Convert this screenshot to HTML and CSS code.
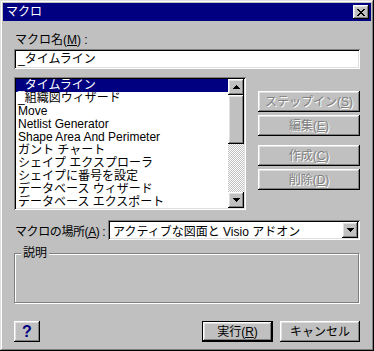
FILE: index.html
```html
<!DOCTYPE html>
<html lang="ja">
<head>
  <meta charset="UTF-8">
  <title>マクロ</title>
  <link rel="stylesheet" href="styles.css">
</head>
<body>
  <div class="window">
    <div class="titlebar">
      <span class="title">マクロ</span>
      <div class="close raised">
        <svg width="8" height="7" viewBox="0 0 8 7"><path d="M0 0h2v1h-2zM6 0h2v1h-2zM1 1h2v1h-2zM5 1h2v1h-2zM2 2h4v1h-4zM3 3h2v1h-2zM2 4h4v1h-4zM1 5h2v1h-2zM5 5h2v1h-2zM0 6h2v1h-2zM6 6h2v1h-2z" fill="#000"/></svg>
      </div>
    </div>

    <div class="content">
      <div class="label">マクロ名(<u>M</u>) :</div>
      <div class="field sunken">_タイムライン</div>

      <div class="list-row">
        <div class="listbox sunken">
          <ul class="items">
            <li class="selected">_タイムライン</li>
            <li>_組織図ウィザード</li>
            <li>Move</li>
            <li>Netlist Generator</li>
            <li>Shape Area And Perimeter</li>
            <li>ガント チャート</li>
            <li>シェイプ エクスプローラ</li>
            <li>シェイプに番号を設定</li>
            <li>データベース ウィザード</li>
            <li>データベース エクスポート</li>
          </ul>
          <div class="scrollbar">
            <div class="sb-btn raised">
              <svg width="7" height="4" viewBox="0 0 7 4"><path d="M3 0h1v1h1v1h1v1h1v1H0V3h1V2h1V1h1z" fill="#000"/></svg>
            </div>
            <div class="sb-thumb raised"></div>
            <div class="sb-track"></div>
            <div class="sb-btn raised">
              <svg width="7" height="4" viewBox="0 0 7 4"><path d="M0 0h7v1H6v1H5v1H4v1H3V3H2V2H1V1H0z" fill="#000"/></svg>
            </div>
          </div>
        </div>

        <div class="side-buttons">
          <div class="btn raised disabled">ステップイン(<u>S</u>)</div>
          <div class="btn raised disabled">編集(<u>E</u>)</div>
          <div class="btn raised disabled spaced">作成(<u>C</u>)</div>
          <div class="btn raised disabled">削除(<u>D</u>)</div>
        </div>
      </div>

      <div class="location-row">
        <span class="location-label">マクロの場所(<u>A</u>) :</span>
        <div class="combo sunken">
          <span class="combo-text">アクティブな図面と Visio アドオン</span>
          <div class="drop raised">
            <svg width="7" height="4" viewBox="0 0 7 4"><path d="M0 0h7v1H6v1H5v1H4v1H3V3H2V2H1V1H0z" fill="#000"/></svg>
          </div>
        </div>
      </div>

      <div class="groupbox">
        <span class="group-title">説明</span>
      </div>

      <div class="footer">
        <div class="btn raised help">?</div>
        <div class="spacer"></div>
        <div class="btn raised default">実行(<u>R</u>)</div>
        <div class="btn raised cancel">キャンセル</div>
      </div>
    </div>
  </div>
</body>
</html>
```

FILE: styles.css
```css
* {
  box-sizing: border-box;
}

body {
  margin: 0;
  font-family: "Liberation Sans", "Noto Sans CJK JP", sans-serif;
  font-size: 12px;
  color: #000;
  background: #c0c0c0;
}

u {
  text-decoration-thickness: 1px;
  text-underline-offset: 1px;
}

.window {
  width: 374px;
  height: 351px;
  padding: 3px;
  background: #c0c0c0;
  box-shadow: inset -1px -1px #000, inset 1px 1px #dfdfdf,
              inset -2px -2px #808080, inset 2px 2px #fff;
}

.raised {
  background: #c0c0c0;
  box-shadow: inset -1px -1px #000, inset 1px 1px #fff,
              inset -2px -2px #808080, inset 2px 2px #dfdfdf;
}

.sunken {
  background: #fff;
  box-shadow: inset 1px 1px #808080, inset -1px -1px #fff,
              inset 2px 2px #000, inset -2px -2px #dfdfdf;
}

/* title bar */
.titlebar {
  height: 18px;
  background: #000080;
  display: flex;
  align-items: center;
  padding: 0 2px 0 3px;
}

.title {
  color: #fff;
  line-height: 18px;
  flex: 1;
}

.close {
  width: 16px;
  height: 14px;
  display: flex;
  align-items: center;
  justify-content: center;
}

/* content */
.content {
  padding: 0 11px;
}

.label {
  margin-top: 12px;
  height: 14px;
  line-height: 14px;
  padding-left: 1px;
}

.field {
  margin-top: 2px;
  height: 20px;
  line-height: 20px;
  padding-left: 4px;
}

.list-row {
  display: flex;
  margin-top: 8px;
  height: 133px;
}

.listbox {
  width: 232px;
  padding: 2px;
  display: flex;
}

.items {
  list-style: none;
  margin: 0;
  padding: 0;
  flex: 1;
  overflow: hidden;
}

.items li {
  height: 13px;
  line-height: 13px;
  padding-left: 2px;
  white-space: nowrap;
}

.items li.selected {
  background: #000080;
  color: #fff;
}

.scrollbar {
  width: 16px;
  display: flex;
  flex-direction: column;
}

.sb-btn {
  height: 16px;
  display: flex;
  align-items: center;
  justify-content: center;
}

.sb-thumb {
  height: 49px;
}

.sb-track {
  flex: 1;
  background: repeating-conic-gradient(#c0c0c0 0 25%, #fff 0 50%) 0 0 / 2px 2px;
}

.side-buttons {
  margin-left: 12px;
  padding-top: 14px;
  width: 102px;
  display: flex;
  flex-direction: column;
  gap: 3px;
}

.btn {
  height: 21px;
  display: flex;
  align-items: center;
  justify-content: center;
  line-height: 14px;
  white-space: nowrap;
}

.btn.disabled {
  color: #808080;
  text-shadow: 1px 1px 0 #fff;
}

.btn.spaced {
  margin-top: 6px;
}

.location-row {
  display: flex;
  align-items: center;
  margin-top: 10px;
  height: 20px;
}

.location-label {
  width: 94px;
  flex: none;
  padding-left: 1px;
  white-space: nowrap;
  letter-spacing: -0.4px;
}

.combo {
  flex: 1;
  height: 20px;
  display: flex;
  align-items: center;
  padding: 2px;
}

.combo-text {
  flex: 1;
  padding-left: 3px;
  white-space: nowrap;
}

.drop {
  width: 16px;
  height: 16px;
  display: flex;
  align-items: center;
  justify-content: center;
}

.groupbox {
  margin-top: 13px;
  width: 345px;
  height: 50px;
  border: 1px solid #808080;
  box-shadow: inset 1px 1px #fff, 1px 1px #fff;
}

.group-title {
  display: inline-block;
  margin: -8px 0 0 6px;
  padding: 0 2px;
  background: #c0c0c0;
  line-height: 14px;
  vertical-align: top;
}

.footer {
  display: flex;
  margin-top: 18px;
  gap: 7px;
}

.spacer {
  flex: 1;
}

.help {
  width: 26px;
  color: #000080;
  font-weight: bold;
  font-size: 16px;
}

.default {
  width: 71px;
  border: 1px solid #000;
}

.cancel {
  width: 80px;
}
```
